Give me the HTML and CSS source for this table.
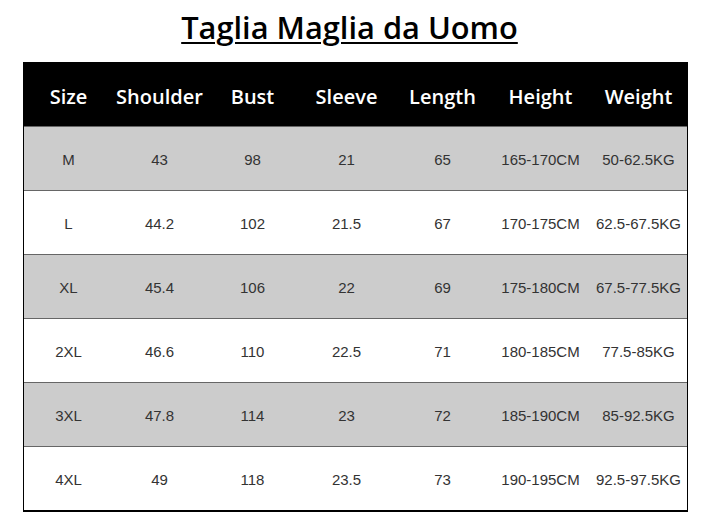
FILE: index.html
```
<!DOCTYPE html>
<html>
<head>
<meta charset="utf-8">
<link rel="stylesheet" href="styles.css">
</head>
<body>
<h1 class="title">Taglia Maglia da Uomo</h1>
<div class="table">
  <div class="row head">
    <div>Size</div><div>Shoulder</div><div>Bust</div><div>Sleeve</div><div>Length</div><div>Height</div><div>Weight</div>
  </div>
  <div class="row gray">
    <div>M</div><div>43</div><div>98</div><div>21</div><div>65</div><div>165-170CM</div><div>50-62.5KG</div>
  </div>
  <div class="row">
    <div>L</div><div>44.2</div><div>102</div><div>21.5</div><div>67</div><div>170-175CM</div><div>62.5-67.5KG</div>
  </div>
  <div class="row gray">
    <div>XL</div><div>45.4</div><div>106</div><div>22</div><div>69</div><div>175-180CM</div><div>67.5-77.5KG</div>
  </div>
  <div class="row">
    <div>2XL</div><div>46.6</div><div>110</div><div>22.5</div><div>71</div><div>180-185CM</div><div>77.5-85KG</div>
  </div>
  <div class="row gray">
    <div>3XL</div><div>47.8</div><div>114</div><div>23</div><div>72</div><div>185-190CM</div><div>85-92.5KG</div>
  </div>
  <div class="row">
    <div>4XL</div><div>49</div><div>118</div><div>23.5</div><div>73</div><div>190-195CM</div><div>92.5-97.5KG</div>
  </div>
</div>
</body>
</html>
```
FILE: styles.css
```
html, body {
  margin: 0;
  padding: 0;
  background: #fff;
}
body {
  padding-top: 8px;
}
.title {
  margin: 0;
  height: 54px;
  text-align: center;
  font-family: "Open Sans", "Noto Sans", sans-serif;
  font-weight: 600;
  font-size: 30.8px;
  line-height: 38px;
  text-decoration: underline;
  text-decoration-thickness: 2px;
  text-underline-offset: 3px;
  color: #000;
  padding-right: 10px;
}
.table {
  margin-left: 23px;
  width: 665px;
  border-left: 1px solid #000;
  border-right: 1px solid #000;
  border-bottom: 2px solid #000;
  box-sizing: border-box;
}
.row {
  display: grid;
  grid-template-columns: 89px 93px 93px 95px 97px 99px 97px;
  height: 64px;
  align-items: center;
  font-family: "Liberation Sans", Arial, sans-serif;
  font-size: 15px;
  color: #333;
  border-top: 1px solid #666;
  box-sizing: border-box;
  padding-top: 1px;
}
.row > div {
  text-align: center;
}
.row.head {
  background: #000;
  color: #fff;
  border-top: none;
  font-family: "Open Sans", "Noto Sans", sans-serif;
  font-weight: 600;
  font-size: 20px;
  padding-top: 4px;
}
.row.gray {
  background: #cccccc;
}
```
